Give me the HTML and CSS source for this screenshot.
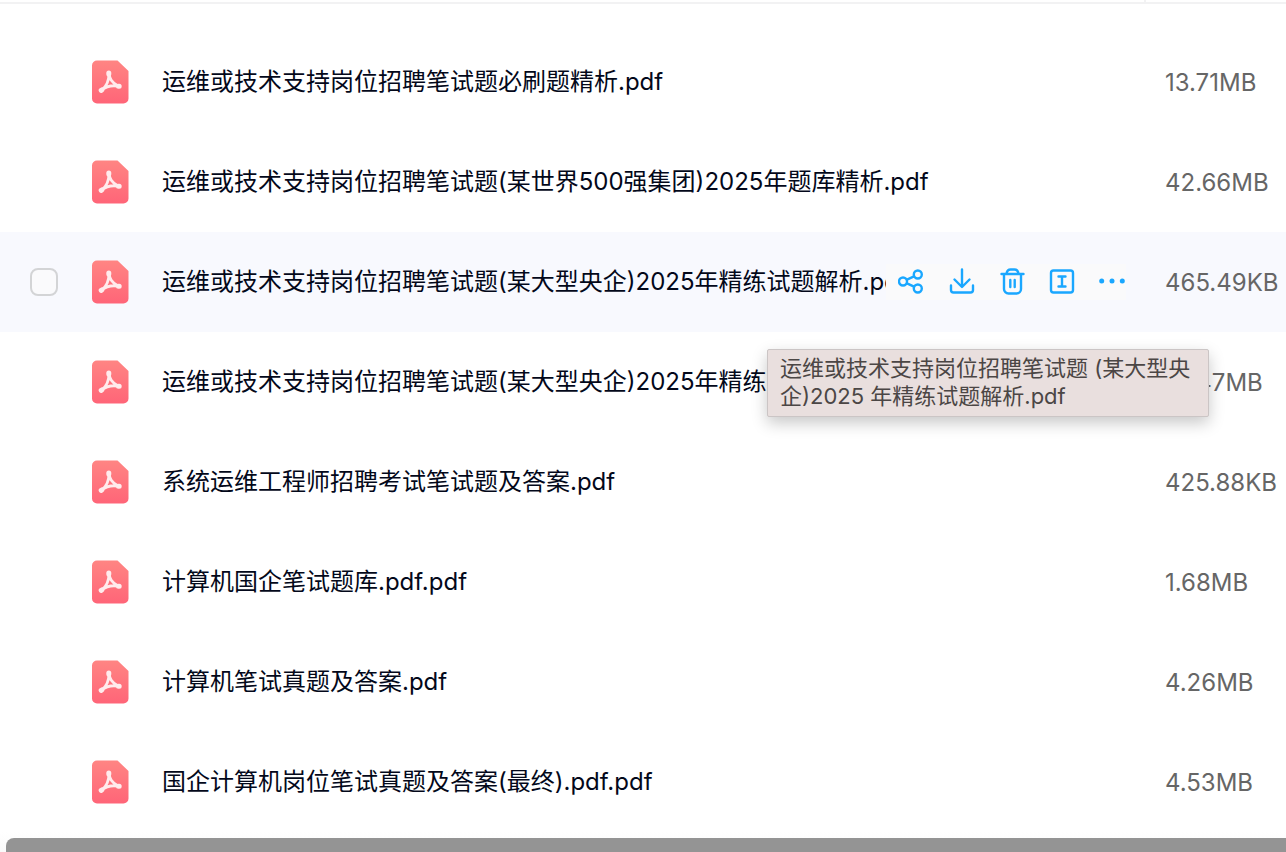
FILE: index.html
```html
<!DOCTYPE html>
<html lang="zh-CN">
<head>
	<meta charset="UTF-8">
	<title>文件列表</title>
	<link rel="stylesheet" href="styles.css">
</head>
<body>

	<!-- 图标 -->
	<svg class="defs" aria-hidden="true">
		<defs>
			<linearGradient id="red" x1="0" y1="0" x2="0" y2="1">
				<stop offset="0" stop-color="#ff8583"/>
				<stop offset="1" stop-color="#ff6578"/>
			</linearGradient>
			<symbol id="pdf" viewBox="0 0 38 44">
				<path fill="url(#red)" d="M6 .5H26.500L37.500 11V38.500a5 5 0 0 1-5 5H6a5 5 0 0 1-5-5V5.500a5 5 0 0 1 5-5z"/>
				<g fill="none" stroke="#ffeced" stroke-linecap="round" stroke-linejoin="round">
					<path stroke-width="2.800" d="M17.800 13.500C19 18.500 20 22.500 27.500 26.200C21 25 15 26.500 10.500 30.200C15 27 18.500 20.500 17.800 13.500z"/>
					<path stroke-width="5" d="M17.800 13V14M27.500 26.200H28.200M10.200 30.400L10.800 30"/>
				</g>
			</symbol>
		</defs>
	</svg>

	<table class="files">
		<colgroup>
			<col class="c-check">
			<col class="c-icon">
			<col>
			<col class="c-size">
		</colgroup>
		<thead>
			<tr>
				<td colspan="3"></td>
				<td><span class="divider"></span></td>
			</tr>
		</thead>
		<tbody>
			<tr>
				<td></td>
				<td><svg class="pdf"><use href="#pdf"/></svg></td>
				<td><div class="name">运维或技术支持岗位招聘笔试题必刷题精析.pdf</div></td>
				<td class="size">13.71MB</td>
			</tr>
			<tr>
				<td></td>
				<td><svg class="pdf"><use href="#pdf"/></svg></td>
				<td><div class="name">运维或技术支持岗位招聘笔试题(某世界500强集团)2025年题库精析.pdf</div></td>
				<td class="size">42.66MB</td>
			</tr>
			<tr class="on">
				<td><input type="checkbox" class="check" aria-label="选择文件"></td>
				<td><svg class="pdf"><use href="#pdf"/></svg></td>
				<td class="cell">
					<div class="line">
						<div class="name">运维或技术支持岗位招聘笔试题(某大型央企)2025年精练试题解析.pdf</div>
						<div class="tools">
							<button type="button" aria-label="分享">
								<svg viewBox="0 0 28 28"><circle cx="5" cy="13.500" r="4"/><circle cx="19.800" cy="6.500" r="4"/><circle cx="19.800" cy="20.500" r="4"/><path d="M9 11.700L16 8.300M9 15.300L16 18.700"/></svg>
							</button>
							<button type="button" aria-label="下载">
								<svg viewBox="0 0 28 28"><path d="M14 1.500V18.500M6.500 11.500L14 19L21.500 11.500M3 17.500V22a2.500 2.500 0 0 0 2.500 2.500H22.500a2.500 2.500 0 0 0 2.500-2.500V17.500"/></svg>
							</button>
							<button type="button" aria-label="删除">
								<svg viewBox="0 0 28 28"><path d="M3.500 6H25.500M8.500 5.500C9 3 10.500 1.500 12.500 1.500H16.500C18.500 1.500 20 3 20.500 5.500M6 6V21a4.500 4.500 0 0 0 4.500 4.500H18.500a4.500 4.500 0 0 0 4.500-4.500V6M12.300 12V19M16.700 12V19"/></svg>
							</button>
							<button type="button" aria-label="重命名">
								<svg viewBox="0 0 28 28"><rect x="3" y="2.500" width="22" height="22" rx="2.500"/><path d="M10.500 8.500H17.500M10.500 18.500H17.500M14 8.500V18.500"/></svg>
							</button>
							<button type="button" aria-label="更多">
								<svg viewBox="0 0 28 28" class="dots"><circle cx="3.700" cy="13" r="2.500"/><circle cx="14" cy="13" r="2.500"/><circle cx="24.300" cy="13" r="2.500"/></svg>
							</button>
						</div>
					</div>
					<div class="tip" role="tooltip">运维或技术支持岗位招聘笔试题 (某大型央企)2025 年精练试题解析.pdf</div>
				</td>
				<td class="size">465.49KB</td>
			</tr>
			<tr>
				<td></td>
				<td><svg class="pdf"><use href="#pdf"/></svg></td>
				<td><div class="name">运维或技术支持岗位招聘笔试题(某大型央企)2025年精练试题.pdf</div></td>
				<td class="size">12.47MB</td>
			</tr>
			<tr>
				<td></td>
				<td><svg class="pdf"><use href="#pdf"/></svg></td>
				<td><div class="name">系统运维工程师招聘考试笔试题及答案.pdf</div></td>
				<td class="size">425.88KB</td>
			</tr>
			<tr>
				<td></td>
				<td><svg class="pdf"><use href="#pdf"/></svg></td>
				<td><div class="name">计算机国企笔试题库.pdf.pdf</div></td>
				<td class="size">1.68MB</td>
			</tr>
			<tr>
				<td></td>
				<td><svg class="pdf"><use href="#pdf"/></svg></td>
				<td><div class="name">计算机笔试真题及答案.pdf</div></td>
				<td class="size">4.26MB</td>
			</tr>
			<tr>
				<td></td>
				<td><svg class="pdf"><use href="#pdf"/></svg></td>
				<td><div class="name">国企计算机岗位笔试真题及答案(最终).pdf.pdf</div></td>
				<td class="size">4.53MB</td>
			</tr>
		</tbody>
	</table>

	<div class="scroll"><div class="thumb"></div></div>

</body>
</html>
```
FILE: styles.css
```css
*{box-sizing: border-box;}

body{
	margin: 0;
	background-color: #fff;
	color: #03081a;
	font-family: Inter, "Noto Sans CJK SC", sans-serif;
	font-size: 24px;
	line-height: 36px;
	overflow: hidden;
}

.defs{
	position: absolute;
	width: 0;
	height: 0;
}

.files{
	width: 100%;
	table-layout: fixed;
	border-collapse: collapse;
}
.files td{padding: 0;}
.files thead td{
	height: 32px;
	vertical-align: top;
	background: linear-gradient(#f2f2f3, #f2f2f3) 0 2px / 100% 2px no-repeat;
}
.files tbody td{height: 100px;}

.c-check{width: 90px;}
.c-icon{width: 72px;}
.c-size{width: 142px;}

.divider{
	display: block;
	width: 2px;
	height: 4px;
	background-color: #f2f2f3;
}

.on{background-color: #f8f9fe;}

.check{
	appearance: none;
	display: block;
	width: 28px;
	height: 28px;
	margin: 0 0 0 30px;
	border: 2px solid #d3d4d6;
	border-radius: 8px;
	background-color: #fafafc;
}

.pdf{
	display: block;
	width: 38px;
	height: 44px;
	margin-left: 1px;
}

.name{
	flex: 1;
	min-width: 0;
	overflow: hidden;
	white-space: nowrap;
}
.files .size{
	padding: 2px 0 0 21px;
	color: #666;
}

.cell{position: relative;}
.line{
	display: flex;
	align-items: center;
}

.tools{
	display: flex;
	gap: 22px;
	padding: 4px 0 4px 12px;
	margin-right: 18px;
	background-color: #fafafb;
}
.tools button{
	width: 28px;
	height: 28px;
	padding: 0;
	border: none;
	background: none;
	cursor: pointer;
}
.tools svg{
	display: block;
	width: 28px;
	height: 28px;
	fill: none;
	stroke: #1aa7ff;
	stroke-width: 2.4;
	stroke-linecap: round;
	stroke-linejoin: round;
}
.tools .dots{
	fill: #1aa7ff;
	stroke: none;
}

/* 文件名提示 */
.tip{
	position: absolute;
	top: 117px;
	right: -65px;
	z-index: 1;
	width: 442px;
	padding: 4px 12px 6px;
	border: 1px solid #cbc5c5;
	border-radius: 2px;
	background-color: #e9dfde;
	box-shadow: 0 6px 16px rgba(0, 0, 0, .22);
	color: #4b4645;
	font-size: 22px;
	line-height: 28px;
}

.scroll{
	padding: 6px 0 0 6px;
	background: linear-gradient(#fff, #fafafa);
}
.thumb{
	height: 14px;
	border-radius: 8px 0 0 0;
	background-color: #949494;
}
```
